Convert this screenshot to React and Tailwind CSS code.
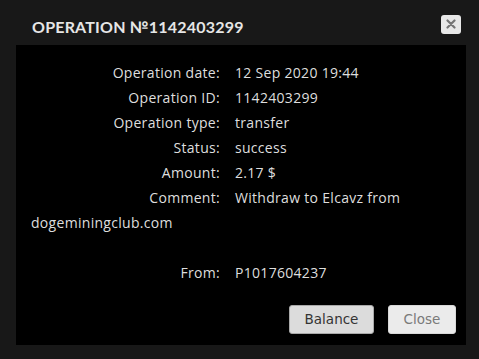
const rows = [
  ['Operation date:', '12 Sep 2020 19:44'],
  ['Operation ID:', '1142403299'],
  ['Operation type:', 'transfer'],
  ['Status:', 'success'],
  ['Amount:', '2.17 $'],
];

const Label = ({ children }) => (
  <span className="inline-block w-[189px] text-right mr-[15px]">{children}</span>
);

export default function App() {
  return (
    <div className="w-[479px] h-[359px] bg-[#181818] pl-4 pr-[13px] overflow-hidden">
      {/* Header */}
      <div className="h-[45px] flex items-center justify-between pt-[9px]">
        <h1 className="pl-4 text-[16px] font-bold uppercase tracking-[0.2px] text-[#e6e6e6] font-['Lato',sans-serif]">
          Operation №1142403299
        </h1>
        <button className="w-5 h-[19px] mr-[5px] -mt-[6px] rounded-[3px] bg-[#e8e8e8] flex items-center justify-center">
          <svg width="10" height="10" viewBox="0 0 10 10">
            <path d="M1.5 1.5 L8.5 8.5 M8.5 1.5 L1.5 8.5" stroke="#767676" strokeWidth="2.2" strokeLinecap="round" />
          </svg>
        </button>
      </div>

      {/* Body */}
      <div className="h-[300px] bg-black flex flex-col">
        <div className="px-[15px] pt-[15px] text-[14px] leading-[25px] tracking-[0.3px] text-[#dedede] font-['Open_Sans',sans-serif]">
          {rows.map(([k, v]) => (
            <div key={k}>
              <Label>{k}</Label>
              {v}
            </div>
          ))}
          <div>
            <Label>Comment:</Label>
            Withdraw to Elcavz from dogeminingclub.com
          </div>
          <div className="h-[25px]"></div>
          <div>
            <Label>From:</Label>
            P1017604237
          </div>
        </div>

        <div className="mt-auto flex justify-end gap-[14px] pr-[10px] pb-[11px] font-['DejaVu_Sans',sans-serif] text-[13.5px]">
          <button className="w-[85px] h-[29px] rounded-[3px] border border-[#a9a9a9] bg-[#dcdcdc] text-[#333]">
            Balance
          </button>
          <button className="w-[68px] h-[29px] rounded-[3px] border border-[#d8d8d8] bg-[#ebebeb] text-[#7a7a7a]">
            Close
          </button>
        </div>
      </div>
    </div>
  );
}
